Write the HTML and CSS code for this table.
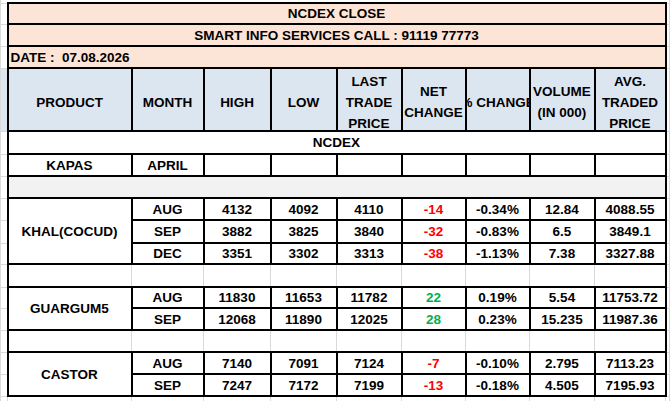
FILE: index.html
```html
<!DOCTYPE html>
<html>
<head>
<meta charset="utf-8">
<link rel="stylesheet" href="styles.css">
</head>
<body>
<table class="sheet">
  <colgroup>
    <col class="cg"><col class="c1"><col class="c2"><col class="c3"><col class="c4"><col class="c5"><col class="c6"><col class="c7"><col class="c8"><col class="c9"><col class="cr">
  </colgroup>
  <tr class="h3 top"><td class="gl"></td><td class="blank" colspan="9"></td><td class="gr"></td></tr>
  <tr class="h21"><td class="gl"></td><td class="title" colspan="9">NCDEX CLOSE</td><td class="gr"></td></tr>
  <tr class="h22"><td class="gl"></td><td class="title" colspan="9">SMART INFO SERVICES CALL : 91119 77773</td><td class="gr"></td></tr>
  <tr class="h22"><td class="gl"></td><td class="title date" colspan="9">DATE :  07.08.2026</td><td class="gr"></td></tr>
  <tr class="h63 hdr"><td class="gl"></td>
    <td><div class="in">PRODUCT</div></td>
    <td><div class="in">MONTH</div></td>
    <td><div class="in">HIGH</div></td>
    <td><div class="in">LOW</div></td>
    <td><div class="in">LAST<br>TRADE<br>PRICE</div></td>
    <td><div class="in">NET<br>CHANGE</div></td>
    <td><div class="in clip"><span>% CHANGE</span></div></td>
    <td><div class="in">VOLUME<br>(IN 000)</div></td>
    <td><div class="in">AVG.<br>TRADED<br>PRICE</div></td>
    <td class="gr"></td></tr>
  <tr class="h23"><td class="gl"></td><td colspan="9">NCDEX</td><td class="gr"></td></tr>
  <tr class="h22"><td class="gl"></td><td>KAPAS</td><td>APRIL</td><td></td><td></td><td></td><td></td><td></td><td></td><td></td><td class="gr"></td></tr>
  <tr class="h22"><td class="gl"></td><td class="grey" colspan="9"></td><td class="gr"></td></tr>

  <tr class="h22"><td class="gl"></td><td rowspan="3">KHAL(COCUD)</td><td>AUG</td><td>4132</td><td>4092</td><td>4110</td><td class="neg">-14</td><td>-0.34%</td><td>12.84</td><td>4088.55</td><td class="gr"></td></tr>
  <tr class="h23"><td class="gl"></td><td>SEP</td><td>3882</td><td>3825</td><td>3840</td><td class="neg">-32</td><td>-0.83%</td><td>6.5</td><td>3849.1</td><td class="gr"></td></tr>
  <tr class="h21"><td class="gl"></td><td>DEC</td><td>3351</td><td>3302</td><td>3313</td><td class="neg">-38</td><td>-1.13%</td><td>7.38</td><td>3327.88</td><td class="gr"></td></tr>

  <tr class="h23 empty"><td class="gl"></td><td></td><td></td><td></td><td></td><td></td><td></td><td></td><td></td><td></td><td class="gr"></td></tr>

  <tr class="h21"><td class="gl"></td><td rowspan="2">GUARGUM5</td><td>AUG</td><td>11830</td><td>11653</td><td>11782</td><td class="pos">22</td><td>0.19%</td><td>5.54</td><td>11753.72</td><td class="gr"></td></tr>
  <tr class="h22"><td class="gl"></td><td>SEP</td><td>12068</td><td>11890</td><td>12025</td><td class="pos">28</td><td>0.23%</td><td>15.235</td><td>11987.36</td><td class="gr"></td></tr>

  <tr class="h22 empty"><td class="gl"></td><td></td><td></td><td></td><td></td><td></td><td></td><td></td><td></td><td></td><td class="gr"></td></tr>

  <tr class="h22"><td class="gl"></td><td rowspan="2">CASTOR</td><td>AUG</td><td>7140</td><td>7091</td><td>7124</td><td class="neg">-7</td><td>-0.10%</td><td>2.795</td><td>7113.23</td><td class="gr"></td></tr>
  <tr class="h22"><td class="gl"></td><td>SEP</td><td>7247</td><td>7172</td><td>7199</td><td class="neg">-13</td><td>-0.18%</td><td>4.505</td><td>7195.93</td><td class="gr"></td></tr>

  <tr class="h5 tail"><td class="gl"></td><td></td><td></td><td></td><td></td><td></td><td></td><td></td><td></td><td></td><td class="gr"></td></tr>
</table>
</body>
</html>
```

FILE: styles.css
```css
html, body {
  margin: 0;
  padding: 0;
  background: #ffffff;
}

body {
  font-family: "Liberation Sans", Arial, sans-serif;
  font-weight: bold;
  font-size: 13.5px;
  color: #000000;
  overflow: hidden;
}

.sheet {
  border-collapse: collapse;
  table-layout: fixed;
  width: 669px;
}

.cg { width: 7px; }
.c1 { width: 124px; }
.c2 { width: 72px; }
.c3 { width: 67px; }
.c4 { width: 66px; }
.c5 { width: 65px; }
.c6 { width: 64px; }
.c7 { width: 64px; }
.c8 { width: 65px; }
.c9 { width: 71px; }
.cr { width: 4px; }

.sheet td {
  border: 2px solid #000000;
  padding: 1px 0 0 0;
  text-align: center;
  vertical-align: middle;
  white-space: nowrap;
  overflow: hidden;
  line-height: 16px;
}

.h3 { height: 3px; }
.h5 { height: 5px; }
.h21 { height: 21px; }
.h22 { height: 22px; }
.h23 { height: 23px; }
.h63 { height: 63px; }

.sheet td.gl {
  border: none;
  border-left: 1px solid #dadada;
  border-bottom: 1px solid #dadada;
  padding: 0;
}

.sheet td.gr {
  border: none;
  border-right: 1px solid #dadada;
  border-bottom: 1px solid #dadada;
  padding: 0;
}

.top td {
  padding: 0;
  line-height: 0;
}

.sheet td.blank {
  border: none;
  border-bottom: 2px solid #000000;
}

.sheet td.title {
  background: #fce4d6;
}

.sheet td.date {
  text-align: left;
  white-space: pre;
  padding-left: 2px;
}

.hdr td {
  background: #dce6f1;
  padding: 0;
  vertical-align: top;
}

.hdr td.gr {
  background: transparent;
}

.in {
  box-sizing: border-box;
  height: 61px;
  padding-top: 5px;
  display: flex;
  flex-direction: column;
  align-items: center;
  justify-content: center;
  line-height: 21px;
  text-align: center;
}

.clip {
  flex-direction: row;
  overflow: hidden;
  white-space: nowrap;
}

.clip span {
  flex: none;
}

.sheet td.grey {
  background: #f2f2f2;
}

.neg { color: #ff0000; }
.pos { color: #00b050; }

.empty td {
  border-left: 1px solid #d9d9d9;
  border-right: 1px solid #d9d9d9;
}

.sheet .empty td:nth-child(2) {
  border-left: 2px solid #000000;
}

.sheet .empty td:nth-child(10) {
  border-right: 2px solid #000000;
}

.sheet .tail td {
  border: none;
  border-left: 1px solid #dadada;
  border-right: 1px solid #dadada;
  padding: 0;
}
```
